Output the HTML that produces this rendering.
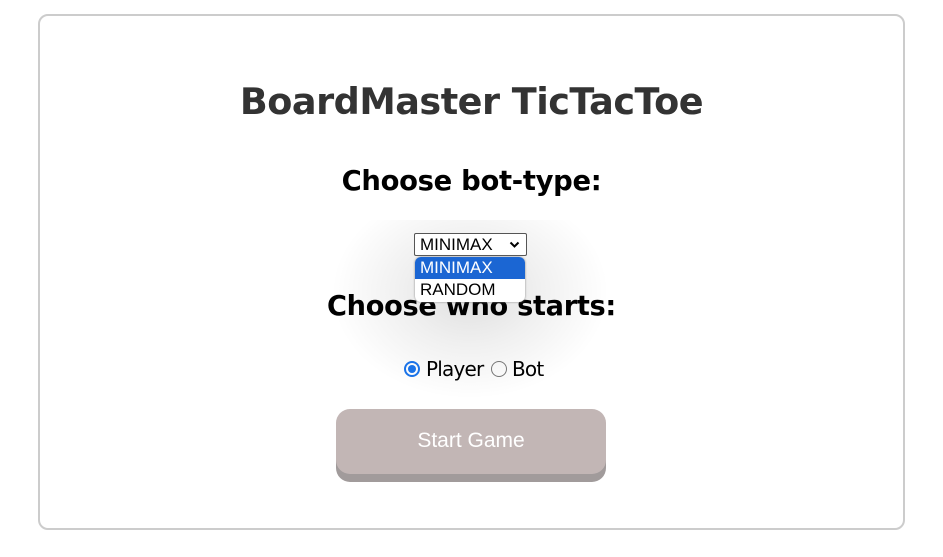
<!DOCTYPE html>
<html><head><style>
body{margin:0;width:943px;height:557px;background:#fff;font-family:"Liberation Sans",sans-serif;position:relative;overflow:hidden}
.card{position:absolute;left:38px;top:14px;width:863px;height:512px;border:2px solid #ccc;border-radius:10px}
.t{position:absolute;left:0;width:943px;text-align:center;font-family:"DejaVu Sans","Liberation Sans",sans-serif;font-weight:bold;white-space:nowrap}
.sel{position:absolute;left:414px;top:233px;border:1px solid #555;border-radius:2px;font-size:17px;line-height:21px;padding-left:5px;box-sizing:border-box;width:113px;height:23px}
.dd{position:absolute;left:415px;top:257px;width:110px;height:45px;border-radius:6px;background:#fff;box-shadow:0 0 2px #888;overflow:hidden;font-size:17px}
.dd div{height:22px;line-height:22px;padding-left:5px}
.btn{position:absolute;left:336px;top:409px;width:270px;height:65px;background:#c2b6b5;border-radius:14px;box-shadow:0 8px 0 #a19b9b;color:#fff;font-size:21px;text-align:center;line-height:64px}
.r{position:absolute;width:16px;height:16px;border-radius:50%;box-sizing:border-box}
.glow{position:absolute;left:330px;top:220px;width:280px;height:180px;background:radial-gradient(ellipse at 50% 40%,rgba(0,0,0,.13) 0%,rgba(0,0,0,.06) 35%,rgba(0,0,0,0) 70%)}
</style></head><body>
<div class="card"></div>
<div class="glow"></div>
<div class="t" style="top:80px;font-size:36.6px;color:#333;letter-spacing:-0.5px">BoardMaster TicTacToe</div>
<div class="t" style="top:166px;font-size:27.4px;color:#000;letter-spacing:-0.3px">Choose bot-type:</div>
<div class="sel" style="background:#fff">MINIMAX <svg style="position:absolute;right:6px;top:7px" width="11" height="8" viewBox="0 0 11 8"><path d="M1.5 1.5L5.5 5.5L9.5 1.5" stroke="#000" stroke-width="2" fill="none"/></svg></div>
<div class="t" style="top:291px;font-size:27.2px;color:#000;letter-spacing:-0.3px">Choose who starts:</div>
<div class="dd" style="z-index:2"><div style="background:#1b66d3;color:#fff">MINIMAX</div><div>RANDOM</div></div>
<div class="r" style="left:404px;top:361px;border:2px solid #1a73e8"><div style="position:absolute;left:2px;top:2px;width:8px;height:8px;border-radius:50%;background:#1a73e8"></div></div>
<div style="position:absolute;left:426px;top:357px;font-size:20px;font-family:'DejaVu Sans',sans-serif;letter-spacing:-0.8px">Player</div>
<div class="r" style="left:491px;top:361px;border:1px solid #767676"></div>
<div style="position:absolute;left:512px;top:357px;font-size:20px;font-family:'DejaVu Sans',sans-serif;letter-spacing:-0.8px">Bot</div>
<div class="btn">Start Game</div>
</body></html>
